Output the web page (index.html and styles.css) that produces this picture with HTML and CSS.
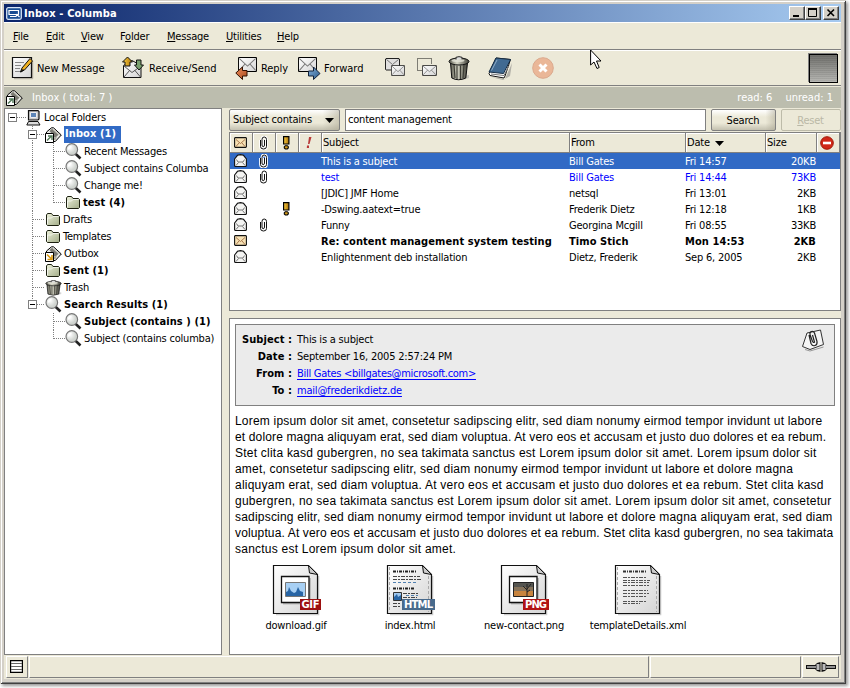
FILE: index.html
```html
<!DOCTYPE html>
<html lang="en">
<head>
<meta charset="utf-8">
<title>Inbox - Columba</title>
<link rel="stylesheet" href="styles.css">
</head>
<body>
<svg class="defs" width="0" height="0">
  <defs>
    <linearGradient id="gGold" x1="0" x2="1"><stop offset="0" stop-color="#ffd040"/><stop offset="1" stop-color="#a87008"/></linearGradient>
    <linearGradient id="gPaper" x1="0" y1="0" x2="1" y2="1"><stop offset="0" stop-color="#fff"/><stop offset="1" stop-color="#d4d4d4"/></linearGradient>
    <linearGradient id="gFolder" x1="0" y1="0" x2="1" y2="1"><stop offset="0" stop-color="#eef2dc"/><stop offset="1" stop-color="#a2ac88"/></linearGradient>
    <linearGradient id="gCan" x1="0" x2="1"><stop offset="0" stop-color="#55554a"/><stop offset=".4" stop-color="#d8d8c8"/><stop offset="1" stop-color="#3c3c34"/></linearGradient>
    <linearGradient id="gOrange" x1="0" y1="0" x2="1" y2="1"><stop offset="0" stop-color="#f09060"/><stop offset="1" stop-color="#a84818"/></linearGradient>
    <linearGradient id="gBlue" x1="0" y1="0" x2="1" y2="1"><stop offset="0" stop-color="#86b2dc"/><stop offset="1" stop-color="#285888"/></linearGradient>
    <radialGradient id="gLens" cx=".35" cy=".35"><stop offset="0" stop-color="#fff"/><stop offset="1" stop-color="#d0d4d0"/></radialGradient>
  </defs>
  <symbol id="envelope" viewBox="0 0 20 14" preserveAspectRatio="none"><path d="M1 .5h18l.5.5v12l-.5.5H1l-.5-.5V1z" fill="url(#gPaper)" stroke="#000"/><path d="M1.500 1.500l8.500 7 8.500-7M1.500 12.500l6-6M18.500 12.500l-6-6" fill="none" stroke="#777"/></symbol>
  <symbol id="folder" viewBox="0 0 14 13"><path d="M.5 2l1-1.500h4L7 2.500h5.500l1 1V11.500l-1 1H1.500l-1-1z" fill="url(#gFolder)" stroke="#1c2010"/><path d="M1.500 11V5h4l1.500-1.500h5.500" fill="none" stroke="#fff" opacity=".7"/></symbol>
  <symbol id="lens" viewBox="0 0 17 17"><path d="M10.500 10.800l5 4.700" stroke="#222" stroke-width="2.600"/><circle cx="6.800" cy="6.500" r="5.800" fill="url(#gLens)" stroke="#777" stroke-width="1.200"/><path d="M3.500 6.500q.5-3 3-3" fill="none" stroke="#fff" stroke-width="1.500"/></symbol>
  <symbol id="tray" viewBox="0 0 17 16"><path d="M1.500 5L6.500.800h2L16.300 8l-6 6.500H7L1.500 8z" fill="#e8e8e4" stroke="#000"/><path d="M4.500 4L7 1.800l6.500 6L10 11z" fill="#7b7a72"/><path d="M8.500 2.500l6.300 5.500" stroke="#c8c7be" stroke-width="1.200"/><path d="M8.500 11l3.500-1-1.500 3h-2z" fill="#aaa99e"/><path d="M.5 6.500h8v9h-8z" fill="#fff" stroke="#000"/></symbol>
  <symbol id="inbox" viewBox="0 0 17 16"><use href="#tray"/><path d="M2 13.500l4-4M3 9h4v4" stroke="#507858" fill="none" stroke-width="1.400"/></symbol>
  <symbol id="outbox" viewBox="0 0 17 16"><use href="#tray"/><path d="M2 8.500l4 4M7 9v4.500H2.500" stroke="#d89810" fill="none" stroke-width="1.600"/></symbol>
  <symbol id="can" viewBox="0 0 22 25" preserveAspectRatio="none"><path d="M4 22q8 4 17 0v-3z" fill="#888" opacity=".35"/><path d="M2.500 7l1.300 15q6.500 3.500 14 0L19.500 7z" fill="url(#gCan)" stroke="#111"/><path d="M6 9l1 13M9 9.500v13.500M12.500 9.500v13.500M16 9l-1 13" stroke="#3c3c34" stroke-width="1.200"/><ellipse cx="11" cy="5.500" rx="10" ry="3.500" fill="url(#gCan)" stroke="#111"/><ellipse cx="10" cy="4.600" rx="6.500" ry="1.700" fill="#e4e4d8" opacity=".8"/><path d="M8 3.500V1.300q3-1.300 6 0v2" fill="#ddd" stroke="#222"/></symbol>
  <symbol id="mailopen" viewBox="0 0 13 13"><path d="M.6 5L3.500 1.300 6.500.6l3 .7L12.400 5v7l-.8.500H1.400l-.8-.5z" fill="#f4f4f2" stroke="#111" stroke-width="1.100"/><path d="M2.500 5.500L4 8h5l1.500-2.500M2 11.500l2.500-3M11 11.500l-2.500-3" fill="none" stroke="#777"/></symbol>
  <symbol id="mailnew" viewBox="0 0 13 11"><path d="M1.200.6h10.600l.6.600v8.400l-.6.800H1.200l-.6-.8V1.200z" fill="#f7e2b4" stroke="#111" stroke-width="1.100"/><path d="M2 2.500l4.500 4 4.500-4M2 9.500l3-3.500M11 9.500L8 6" fill="none" stroke="#a87850"/></symbol>
  <symbol id="clip" viewBox="0 0 9 14"><path d="M1.500 4v6.500q0 2.500 3 2.500t3-2.500V3.500Q7.500 1 5.200 1T3 3.500V9q0 1.700 1.200 1.700T5.500 9V4" fill="none" stroke="#fff" stroke-width="2.800"/><path d="M1.500 4v6.500q0 2.500 3 2.500t3-2.500V3.500Q7.500 1 5.200 1T3 3.500V9q0 1.700 1.200 1.700T5.500 9V4" fill="none" stroke="#111" stroke-width="1"/></symbol>
  <symbol id="excl" viewBox="0 0 7 14"><path d="M.6.600h5.300V8H.600z" fill="url(#gGold)" stroke="#000" stroke-width="1.200"/><path d="M2.300 9.700h2l1 1v1.300l-1 1h-2l-1-1v-1.300z" fill="#d09818" stroke="#000" stroke-width="1.100"/></symbol>
  <symbol id="page" viewBox="0 0 50 54"><path d="M4 50.500h42.500V12" fill="none" stroke="#999" stroke-width="1.600" opacity=".5"/><path d="M1.500 1.500h35l9 9V49.500H1.500z" fill="url(#gPaper)" stroke="#111" stroke-width="1.200"/><path d="M36.500 1.500l1 7.500 8 1.500z" fill="#ccc" stroke="#111"/></symbol>
  <symbol id="pagetext" viewBox="0 0 50 54"><use href="#page"/><path d="M3.500 3v45M42.500 12v36" stroke="#aaa" stroke-dasharray="3 2"/></symbol>
</svg>

<div class="window">
  <header class="titlebar">
    <svg class="appicon" width="16" height="13" viewBox="0 0 16 13"><rect x=".7" y=".7" width="14.600" height="11.600" rx="1.500" fill="#194c92" stroke="#d5e2f4" stroke-width="1.300"/><path d="M3 3.500h9.500v4H3zM4 9.500h6l1-2 2.500 2.500" fill="none" stroke="#fff" stroke-width="1.200"/></svg>
    <h1>Inbox - Columba</h1>
    <div class="controls">
      <b><svg width="14" height="12"><path d="M3 9h6" stroke="#000" stroke-width="2"/></svg></b><b><svg width="14" height="12"><path d="M2.500 2v7.500h8V2" fill="none" stroke="#000"/><path d="M2 2h9" stroke="#000" stroke-width="2"/></svg></b><b class="close"><svg width="14" height="12"><path d="M3.500 2.500l6.500 6.500M10 2.500L3.500 9" stroke="#000" stroke-width="1.600"/></svg></b>
    </div>
  </header>

  <nav class="menubar">
    <span class="m-file"><u>F</u>ile</span><span class="m-edit"><u>E</u>dit</span><span class="m-view"><u>V</u>iew</span><span class="m-folder">F<u>o</u>lder</span><span class="m-message"><u>M</u>essage</span><span class="m-util"><u>U</u>tilities</span><span><u>H</u>elp</span>
  </nav>

  <div class="toolbar">
    <div class="tool t-new"><svg width="25" height="24" viewBox="0 0 25 24"><path d="M3 22.700h18.700V5" fill="none" stroke="#aaa69a"/><path d="M1.500 1.500h19v20h-19z" fill="url(#gPaper)" stroke="#111" stroke-width="1.200"/><path d="M4 6.500h9M4 9.500h6M4 12.500h5M4 15.500h6" stroke="#888"/><path d="M19 2.500l-8 9.500-1.500 4 4-2 8-9z" fill="#f0b020" stroke="#111"/><path d="M9.500 16l3-2.500" stroke="#111" stroke-width="1.500"/></svg><span>New Message</span></div>
    <div class="tool t-receive"><svg width="27" height="24" viewBox="0 0 27 24"><path d="M2.500 9.500l8.500-5 9 5v12h-17.500z" fill="url(#gPaper)" stroke="#111"/><path d="M3 21l6-7M19.500 21l-6-7M3 10l8 6.500 9-6.500" fill="none" stroke="#555"/><path d="M6.500 1L1.500 6h2.500v4h5V6h2.500z" fill="url(#gGold)" stroke="#111"/><path d="M15.500 4h4.500v5h2.500l-4.500 5-4.500-5h2z" fill="#79a070" stroke="#111"/></svg><span>Receive/Send</span></div>
    <div class="tool t-reply"><svg width="26" height="25" viewBox="0 0 26 25"><use href="#envelope" x="3" y="1" width="19" height="15"/><path d="M.8 17L7.500 11v3.500H12V20H7.500v3.500z" fill="url(#gOrange)" stroke="#301000"/></svg><span>Reply</span></div>
    <div class="tool t-forward"><svg width="26" height="25" viewBox="0 0 26 25"><use href="#envelope" x="0" y="1" width="19" height="15"/><path d="M22 17.500L15.500 11v4h-5v5h5v3.500z" fill="url(#gBlue)" stroke="#102038"/></svg><span>Forward</span></div>
    <svg class="t-copy" width="21" height="20" viewBox="0 0 21 20"><path d="M1 .5h13l.5.500v11H1l-.5-.5V1z" fill="#e0dfdf" stroke="#222"/><path d="M1.500 1.500l6 5 6-5" fill="none" stroke="#777"/><use href="#envelope" x="6" y="7" width="14" height="11"/></svg>
    <svg class="t-move" width="21" height="20" viewBox="0 0 21 20"><path d="M.5.500h14v12H.500z" fill="none" stroke="#111" stroke-dasharray="1 1"/><path d="M5 6h15v13H5z" fill="#ece9d8"/><use href="#envelope" x="5" y="7" width="15" height="11"/></svg>
    <svg class="t-trash" width="22" height="25"><use href="#can"/></svg>
    <svg class="t-book" width="24" height="23" viewBox="0 0 24 23"><path d="M3 20l14 2 7-16-2 13-7 4z" fill="#777" opacity=".5"/><path d="M8 1l14.500 1.500L17 19l-1 2L2 18.500l-1-2z" fill="#fff" stroke="#111"/><path d="M8 1l14.500 1.500-7 14L1 15z" fill="#416a92" stroke="#183048"/><path d="M9 3L3.500 13.500" stroke="#8eacc8"/><path d="M3 17l13 1.500 5-10" fill="none" stroke="#777"/></svg>
    <svg class="t-stop" width="22" height="22" viewBox="0 0 22 22"><circle cx="11" cy="11" r="10.300" fill="#eab798" stroke="#dba98d"/><path d="M7.500 7.500l7 7M14.500 7.500l-7 7" stroke="#fff" stroke-width="3"/></svg>
    <div class="throbber"></div>
  </div>

  <div class="infobar"><svg width="17" height="16"><use href="#inbox"/></svg><span class="total">Inbox ( total: 7 )</span><span class="read">read: 6</span><span>unread: 1</span></div>

  <main class="work">
    <aside class="tree">
      <div class="row"><i class="g0"><s class="toggle"></s></i><svg class="pc" width="15" height="16" viewBox="0 0 15 16"><path d="M2.500.6h9.500l1 1v7.400l-1 1h-9.500z" fill="#ccc" stroke="#111" stroke-width="1.200"/><path d="M4.500 2.500h6v5h-6z" fill="#5e86b8" stroke="#eee"/><path d="M2.500 11.500h9.500l2 3.500H.800z" fill="#ddd" stroke="#111"/></svg><span>Local Folders</span></div>
      <div class="row"><i class="g1"><s class="toggle"></s></i><svg class="big" width="17" height="16"><use href="#inbox"/></svg><strong class="picked">Inbox (1)</strong></div>
      <div class="row"><i class="v1"></i><i class="g2"></i><svg class="big" width="17" height="17"><use href="#lens"/></svg><span>Recent Messages</span></div>
      <div class="row"><i class="v1"></i><i class="g2"></i><svg class="big" width="17" height="17"><use href="#lens"/></svg><span>Subject contains Columba</span></div>
      <div class="row"><i class="v1"></i><i class="g2"></i><svg class="big" width="17" height="17"><use href="#lens"/></svg><span>Change me!</span></div>
      <div class="row"><i class="v1"></i><i class="g2 end"></i><svg class="small" width="14" height="13"><use href="#folder"/></svg><strong>test (4)</strong></div>
      <div class="row"><i class="g1"></i><svg class="small" width="14" height="13"><use href="#folder"/></svg><span>Drafts</span></div>
      <div class="row"><i class="g1"></i><svg class="small" width="14" height="13"><use href="#folder"/></svg><span>Templates</span></div>
      <div class="row"><i class="g1"></i><svg class="big" width="17" height="16"><use href="#outbox"/></svg><span>Outbox</span></div>
      <div class="row"><i class="g1"></i><svg class="small" width="14" height="13"><use href="#folder"/></svg><strong>Sent (1)</strong></div>
      <div class="row"><i class="g1"></i><svg class="big" width="17" height="16"><use href="#can"/></svg><span>Trash</span></div>
      <div class="row"><i class="g1 end"><s class="toggle"></s></i><svg class="big" width="17" height="17"><use href="#lens"/></svg><strong>Search Results (1)</strong></div>
      <div class="row"><i class="v1 none"></i><i class="g2"></i><svg class="big" width="17" height="17"><use href="#lens"/></svg><strong>Subject (contains ) (1)</strong></div>
      <div class="row"><i class="v1 none"></i><i class="g2 end"></i><svg class="big" width="17" height="17"><use href="#lens"/></svg><span>Subject (contains columba)</span></div>
    </aside>

    <section class="right">
      <div class="search">
        <div class="combo"><span>Subject contains</span><svg width="9" height="5"><path d="M0 0h9L4.500 5z"/></svg></div>
        <div class="field">content management</div>
        <div class="button">Search</div>
        <div class="button off"><span><u>R</u>eset</span></div>
      </div>

      <div class="list">
        <div class="line head">
          <span><svg width="13" height="11"><use href="#mailnew"/></svg></span><span><svg width="9" height="14"><use href="#clip"/></svg></span><span><svg width="7" height="14"><use href="#excl"/></svg></span><span><svg width="6" height="12" viewBox="0 0 6 12"><path d="M3 0h2.500L3.500 7H2zM1 8.500h2V11H.800z" fill="#b83a38"/></svg></span>
          <span class="txt">Subject</span><span class="txt">From</span><span class="txt">Date <svg width="9" height="5"><path d="M0 0h9L4.500 5z"/></svg></span><span class="txt">Size</span><span class="last"><svg width="14" height="14" viewBox="0 0 14 14"><circle cx="7" cy="7" r="6.300" fill="#d02818" stroke="#a01808"/><path d="M3 7h8" stroke="#fff" stroke-width="2.600"/></svg></span>
        </div>
        <div class="line sel"><span><svg width="13" height="13"><use href="#mailopen"/></svg></span><span><svg width="9" height="14"><use href="#clip"/></svg></span><span></span><span></span><span class="txt">This is a subject</span><span class="txt">Bill Gates</span><span class="txt">Fri 14:57</span><span class="num">20KB</span></div>
        <div class="line blue"><span><svg width="13" height="13"><use href="#mailopen"/></svg></span><span><svg width="9" height="14"><use href="#clip"/></svg></span><span></span><span></span><span class="txt">test</span><span class="txt">Bill Gates</span><span class="txt">Fri 14:44</span><span class="num">73KB</span></div>
        <div class="line"><span><svg width="13" height="13"><use href="#mailopen"/></svg></span><span></span><span></span><span></span><span class="txt">[JDIC] JMF Home</span><span class="txt">netsql</span><span class="txt">Fri 13:01</span><span class="num">2KB</span></div>
        <div class="line"><span><svg width="13" height="13"><use href="#mailopen"/></svg></span><span></span><span><svg width="7" height="14"><use href="#excl"/></svg></span><span></span><span class="txt">-Dswing.aatext=true</span><span class="txt">Frederik Dietz</span><span class="txt">Fri 12:18</span><span class="num">1KB</span></div>
        <div class="line"><span><svg width="13" height="13"><use href="#mailopen"/></svg></span><span><svg width="9" height="14"><use href="#clip"/></svg></span><span></span><span></span><span class="txt">Funny</span><span class="txt">Georgina Mcgill</span><span class="txt">Fri 08:55</span><span class="num">33KB</span></div>
        <div class="line bold"><span><svg width="13" height="11"><use href="#mailnew"/></svg></span><span></span><span></span><span></span><span class="txt">Re: content management system testing</span><span class="txt">Timo Stich</span><span class="txt">Mon 14:53</span><span class="num">2KB</span></div>
        <div class="line"><span><svg width="13" height="13"><use href="#mailopen"/></svg></span><span></span><span></span><span></span><span class="txt">Enlightenment deb installation</span><span class="txt">Dietz, Frederik</span><span class="txt">Sep 6, 2005</span><span class="num">2KB</span></div>
      </div>

      <article class="message">
        <div class="meta">
          <dl><dt>Subject :</dt><dd>This is a subject</dd><dt>Date :</dt><dd>September 16, 2005 2:57:24 PM</dd><dt>From :</dt><dd><a class="sender">Bill Gates &lt;billgates@microsoft.com&gt;</a></dd><dt>To :</dt><dd><a>mail@frederikdietz.de</a></dd></dl>
          <svg class="attach" width="24" height="23" viewBox="0 0 24 23"><path d="M6 4l13.500-3L22.500 15.500 9 20.500l-7.500-3z" fill="#f5f5f5" stroke="#333"/><path d="M4 20.500l5 1.500 13.500-4" fill="none" stroke="#999"/><path d="M8 6l2 8.500q1.500 3 4 2t2-4L13.500 4q-1-2-3-1.500T9 5.500l2.500 7q1 1.500 2 .5L11.500 6" fill="none" stroke="#222" stroke-width="1.200"/></svg>
        </div>
        <div class="body">
          <div class="mid">Lorem ipsum dolor sit amet, consetetur sadipscing elitr, sed diam nonumy eirmod tempor invidunt ut labore</div>
          <div>et dolore magna aliquyam erat, sed diam voluptua. At vero eos et accusam et justo duo dolores et ea rebum.</div>
          <div class="loose">Stet clita kasd gubergren, no sea takimata sanctus est Lorem ipsum dolor sit amet. Lorem ipsum dolor sit</div>
          <div class="mid">amet, consetetur sadipscing elitr, sed diam nonumy eirmod tempor invidunt ut labore et dolore magna</div>
          <div class="loose">aliquyam erat, sed diam voluptua. At vero eos et accusam et justo duo dolores et ea rebum. Stet clita kasd</div>
          <div class="loose">gubergren, no sea takimata sanctus est Lorem ipsum dolor sit amet. Lorem ipsum dolor sit amet, consetetur</div>
          <div class="mid">sadipscing elitr, sed diam nonumy eirmod tempor invidunt ut labore et dolore magna aliquyam erat, sed diam</div>
          <div>voluptua. At vero eos et accusam et justo duo dolores et ea rebum. Stet clita kasd gubergren, no sea takimata</div>
          <div class="loose">sanctus est Lorem ipsum dolor sit amet.</div>
        </div>
        <div class="files">
          <figure><svg width="50" height="54" viewBox="0 0 50 54"><use href="#page"/><path d="M11 39.500h27V14" stroke="#bbb" fill="none" stroke-width="2"/><path d="M9.500 12.500h27.500v26H9.500z" fill="#fff" stroke="#111" stroke-width="1.300"/><path d="M13.500 18.500h20v14h-20z" fill="#a8d0f4" stroke="#777"/><path d="M14 32v-4l2-1 1-4 2 4 3 2 2-1 2-5 2 4 3 1v4z" fill="#2865a5"/><rect x="28" y="35" width="21" height="11" fill="#9c1010"/><text class="tag" x="29.500" y="44" textLength="18">GIF</text></svg><figcaption>download.gif</figcaption></figure>
          <figure><svg width="50" height="54" viewBox="0 0 50 54"><use href="#pagetext"/><path d="M7 7.500h24M7 24.500h21" stroke="#222" stroke-width="2" stroke-dasharray="3 1 1 1"/><path d="M7 12.500h27M7 15.500h28M17 29.500h16M17 33.500h14M7 39.500h8M7 42.500h8" stroke="#444" stroke-dasharray="4 1 2 1"/><path d="M7 18.500h24M20 31.500h12" stroke="#5080b0" stroke-dasharray="3 2"/><path d="M7.500 28.500h8v8h-8z" fill="#a0c8ee" stroke="#333"/><path d="M8 36v-3l3-3 1 3 3-2v5z" fill="#2865a5"/><rect x="16" y="35" width="33" height="11" fill="#486a8c"/><text class="tag" x="18" y="44" textLength="29">HTML</text></svg><figcaption>index.html</figcaption></figure>
          <figure><svg width="50" height="54" viewBox="0 0 50 54"><use href="#page"/><path d="M11 39.500h27V14" stroke="#bbb" fill="none" stroke-width="2"/><path d="M9.500 12.500h27.500v26H9.500z" fill="#fff" stroke="#111" stroke-width="1.300"/><path d="M13.500 18.500h20v14h-20z" fill="#555550" stroke="#222"/><path d="M14 27h19v5H14z" fill="#c8843e"/><path d="M14 23h19v4H14z" fill="#85725a"/><path d="M27 32V20M27 26l-4-4M27 25l4-5M27 28l3-2" stroke="#222" fill="none"/><rect x="23" y="35" width="26" height="11" fill="#b01414"/><text class="tag" x="25" y="44" textLength="22">PNG</text></svg><figcaption>new-contact.png</figcaption></figure>
          <figure><svg width="50" height="54" viewBox="0 0 50 54"><use href="#pagetext"/><path d="M9 7.500h24" stroke="#333" stroke-width="2" stroke-dasharray="3 1 1 1"/><path d="M9 13.500h24M9 16.500h27M9 18.500h26M9 21.500h26M9 26.500h25M9 29.500h26M9 32.500h24M9 37.500h24M9 39.500h17" stroke="#555" stroke-dasharray="4 1 2 1"/></svg><figcaption>templateDetails.xml</figcaption></figure>
        </div>
      </article>
    </section>
  </main>

  <footer class="status">
    <div class="cell c1"><svg width="13" height="13" viewBox="0 0 13 13"><path d="M.6.600h11.800v11.800H.600z" fill="#fff" stroke="#000" stroke-width="1.200"/><path d="M1 3.500h11M1 6.500h11M1 9.500h11" stroke="#666"/></svg></div><div class="cell c2"></div><div class="cell c3"></div><div class="cell c4"><svg width="30" height="10" viewBox="0 0 30 10"><path d="M0 3h9l2-2 3.500-1v10l-3.500-1-2-2H0zM30 3h-9l-2-2-3.500-1v10l3.500-1 2-2h9z" fill="#111"/><path d="M1 5h9M20 5h9" stroke="#bbb" stroke-width="1.500"/><path d="M12 2v6M18 2v6" stroke="#bbb" stroke-width="3"/></svg></div>
  </footer>
</div>
<svg class="cursor" width="13" height="21" viewBox="0 0 13 21"><path d="M.6 1v15l3.400-3L7 19.500l2.200-1-2.700-6.500h4.500z" fill="#fff" stroke="#000"/></svg>
</body>
</html>
```
FILE: styles.css
```css
* { box-sizing: border-box; }
body { margin: 0; width: 850px; height: 688px; overflow: hidden; background: #fff; font: 11px/16px "DejaVu Sans Condensed", "DejaVu Sans", sans-serif; font-stretch: condensed; color: #000; letter-spacing: -.2px; white-space: nowrap; }
svg { display: block; flex: none; }
.defs { position: absolute; }
u { text-underline-offset: 1px; }
strong, .bold, dt { font-weight: bold; letter-spacing: .08px; }

.window { width: 846px; height: 684px; display: flex; flex-direction: column; padding: 4px 5px 5px 4px; background: #ece9d8; box-shadow: inset 1px 1px #d4d0c8, inset -1px -1px #404040, inset 2px 2px #fff, inset -2px -2px #808080, inset 4px 4px #d4d0c8, inset -5px -5px #d4d0c8, 2px 2px 3px #999; }
.titlebar { height: 18px; flex: none; display: flex; align-items: center; padding: 0 2px; background: linear-gradient(90deg, #0a246a, #a6caf0); color: #fff; }
.titlebar h1 { margin: 1px auto 0 2px; font-size: 11px; line-height: 16px; letter-spacing: .15px; }
.controls { display: flex; }
.controls b { width: 16px; height: 14px; background: #d4d0c8; border: 1px solid; border-color: #fff #404040 #404040 #fff; box-shadow: inset -1px -1px #808080; }
.controls .close { margin-left: 2px; }
.menubar { height: 28px; flex: none; display: flex; align-items: center; padding: 1px 0 0 9px; border-top: 1px solid #fff; border-bottom: 1px solid #808080; }
.m-file { width: 33px; }
.m-edit { width: 35px; }
.m-view { width: 39px; }
.m-folder { width: 47px; }
.m-message { width: 59px; }
.m-util { width: 51px; }
.toolbar { height: 36px; flex: none; display: flex; align-items: center; padding-left: 7px; border-top: 1px solid #fff; border-bottom: 1px solid #808080; }
.tool { display: flex; align-items: center; letter-spacing: -.05px; }
.t-new { width: 110px; }
.t-receive { width: 114px; letter-spacing: .05px; }
.t-new span, .t-receive span { margin: 1px 0 0 1px; }
.t-reply span, .t-forward span { margin-top: 1px; }
.t-reply { width: 63px; }
.t-forward { width: 87px; }
.t-copy { margin-right: 11px; }
.t-move { margin-right: 10px; }
.t-trash { margin-right: 18px; }
.t-book { margin-right: 20px; }
.throbber { width: 29px; height: 29px; margin: 0 3px 0 auto; border: 1px solid #000; background: repeating-linear-gradient(transparent 0 1px, rgba(0,0,0,.07) 1px 2px), linear-gradient(#70706c, #b8b8b4); box-shadow: -1px -1px #808080; }
.infobar { height: 22px; flex: none; display: flex; align-items: center; border-top: 1px solid #ece9d8; padding: 0 8px 0 2px; background: #bcbdae; color: #fff; letter-spacing: 0; }
.total { margin: 0 auto 0 9px; letter-spacing: .05px; }
.read { margin-right: 13px; }

.work { height: 547px; flex: none; display: flex; gap: 7px; }
.tree { width: 218px; border: 1px solid #808080; background: #fff; }
.row { height: 17px; display: flex; align-items: center; }
.row i { align-self: stretch; flex: none; --dotx: repeating-linear-gradient(90deg, #808080 0 1px, transparent 1px 2px); --doty: repeating-linear-gradient(#808080 0 1px, transparent 1px 2px); background-repeat: no-repeat; }
.g0 { width: 21px; background-image: var(--dotx); background-size: 9px 1px; background-position: 12px 8px; }
.g1, .v1 { width: 40px; background-image: var(--doty), var(--dotx); background-size: 1px 17px, 12px 1px; background-position: 27px 0, 28px 8px; }
.row .v1 { background-size: 1px 17px, 0 0; }
.row .v1.none { background: none; }
.g2 { width: 20px; background-image: var(--doty), var(--dotx); background-size: 1px 17px, 11px 1px; background-position: 8px 0, 9px 8px; }
.row .end { background-size: 1px 9px, 11px 1px; }
.toggle { display: block; width: 9px; height: 9px; margin: 4px 0 0 3px; border: 1px solid #808080; background: linear-gradient(#000, #000) center / 5px 1px no-repeat #fff; }
.g1 .toggle { margin-left: 23px; }
.pc { margin-right: 3px; }
.big { margin-right: 2px; }
.small { margin: 0 3px 0 1px; }
.picked { height: 17px; width: 57px; padding: 0 1px; background: #316ac5; color: #fff; }

.right { width: 612px; }
.search { height: 24px; display: flex; padding-top: 1px; }
.combo, .button { height: 22px; border: 1px solid #808080; border-radius: 2px; background: linear-gradient(90deg, transparent 85%, rgba(170,165,145,.5)), linear-gradient(#fff, #ece9d8 35%, #ece9d8 65%, #c4c1b0); display: flex; align-items: center; }
.combo { width: 111px; padding: 0 5px 0 3px; justify-content: space-between; margin-right: 5px; }
.field { width: 361px; height: 22px; padding: 2px; background: #fff; border: 1px solid #808080; margin-right: 5px; }
.button { width: 65px; justify-content: center; padding: 1px 1px 0 0; margin-right: 5px; }
.button.off { width: 60px; margin: 0; background: none; border-color: #bdbba9; color: #bab8a6; }
.list { height: 179px; border: 1px solid #808080; background: #fff; }
.line { height: 16px; display: grid; grid-template-columns: 23px 23px 23px 23px 248px 116px 80px 51px 23px; align-items: center; }
.line > span:not(.txt):not(.num) { display: flex; justify-content: center; }
.line:not(.head) > span:first-child svg { margin: 0 2px 2px 0; }
.line:not(.head) > span:nth-child(n+2) svg { margin-right: 2px; }
.line:not(.head) .txt { margin: 2px 0 0 -1px; line-height: 14px; }
.line .num { text-align: right; margin: 2px 1px 0 0; line-height: 14px; }
.line.head { height: 20px; background: #ece9d8; border-bottom: 1px solid #808080; align-items: stretch; }
.head > span { border-right: 1px solid #808080; box-shadow: inset 1px 1px #fff; align-items: center; }
.head > span:not(.txt) svg { margin-right: 2px; }
.head .txt { display: flex; gap: 5px; padding: 1px 0 0 1px; }
.sel { background: #316ac5; color: #fff; }
.blue { color: #00f; }

.message { height: 337px; margin-top: 7px; border: 1px solid #808080; background: #fff; padding: 5px; }
.meta { height: 82px; display: flex; justify-content: space-between; border: 1px solid #808080; background: #ebebeb; padding: 6px 9px 0 6px; }
.attach { margin-top: -2px; }
dl { display: grid; grid-template-columns: 50px 1fr; gap: 0 5px; grid-auto-rows: 17px; line-height: 17px; margin: 0; }
dt { text-align: right; }
dd { margin: 0; }
a { color: #00f; text-decoration: underline; text-underline-offset: 2px; }
.sender { letter-spacing: -.28px; }
.body { margin: 7px 0 0; font: 12px/16px "Liberation Sans", Arial, sans-serif; letter-spacing: .14px; }
.body .mid { letter-spacing: .2px; }
.body .loose { letter-spacing: .23px; }
.files { display: flex; margin: 7px 0 0 4px; }
figure { width: 114px; margin: 0; display: flex; flex-direction: column; align-items: center; }
figure svg { margin-left: 2px; }
.tag { font: bold 10px "DejaVu Sans", sans-serif; letter-spacing: 0; fill: #fff; }

.status { height: 23px; display: flex; gap: 1px; padding: 1px 2px 0 2px; }
.cell { height: 22px; flex: none; border: 1px solid; border-color: #fff #808080 #808080 #fff; display: flex; align-items: center; justify-content: center; }
.c1 { width: 22px; padding: 0 2px 2px 0; }
.c2 { width: 620px; }
.c3 { width: 151px; }
.cell.c4 { flex: 1; }
.cursor { position: absolute; left: 590px; top: 49px; }
```
